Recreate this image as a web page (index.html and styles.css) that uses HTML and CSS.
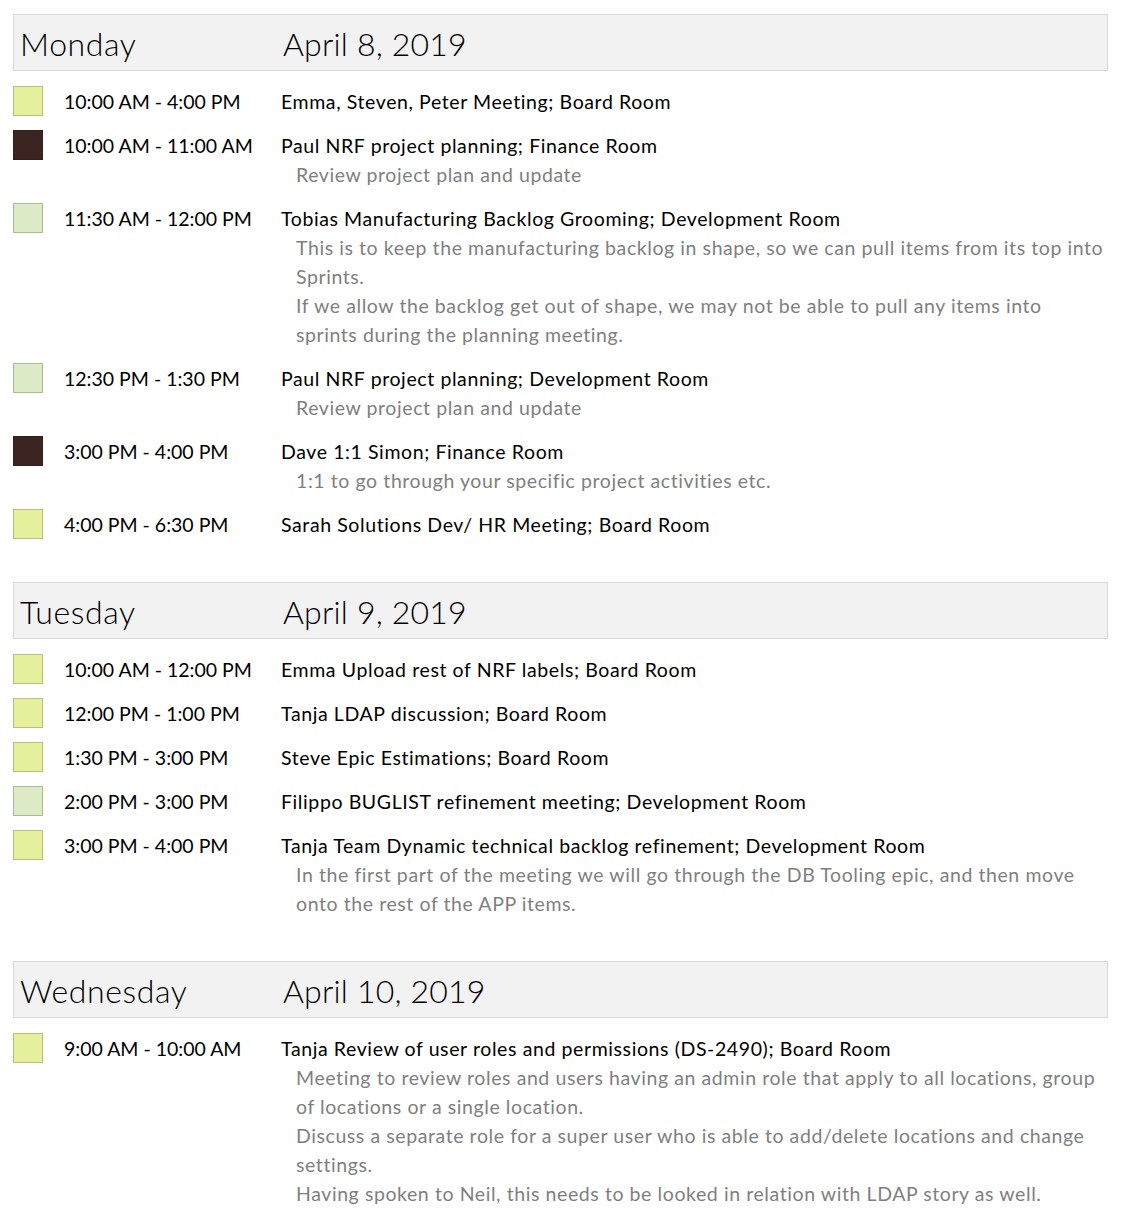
FILE: index.html
```html
<!DOCTYPE html>
<html>
<head>
<meta charset="utf-8">
<link rel="stylesheet" href="styles.css">
</head>
<body>
<div class="agenda">

<section class="day">
  <div class="day-head"><span class="day-name">Monday</span><span class="day-date">April 8, 2019</span></div>
  <div class="item"><span class="sw sw-yellow"></span><span class="time">10:00 AM - 4:00 PM</span><div class="info"><div class="title">Emma, Steven, Peter Meeting; Board Room</div></div></div>
  <div class="item"><span class="sw sw-brown"></span><span class="time">10:00 AM - 11:00 AM</span><div class="info"><div class="title">Paul NRF project planning; Finance Room</div><div class="desc">Review project plan and update</div></div></div>
  <div class="item"><span class="sw sw-green"></span><span class="time">11:30 AM - 12:00 PM</span><div class="info"><div class="title">Tobias Manufacturing Backlog Grooming; Development Room</div><div class="desc">This is to keep the manufacturing backlog in shape, so we can pull items from its top into Sprints.</div><div class="desc">If we allow the backlog get out of shape, we may not be able to pull any items into sprints during the planning meeting.</div></div></div>
  <div class="item"><span class="sw sw-green"></span><span class="time">12:30 PM - 1:30 PM</span><div class="info"><div class="title">Paul NRF project planning; Development Room</div><div class="desc">Review project plan and update</div></div></div>
  <div class="item"><span class="sw sw-brown"></span><span class="time">3:00 PM - 4:00 PM</span><div class="info"><div class="title">Dave 1:1 Simon; Finance Room</div><div class="desc">1:1 to go through your specific project activities etc.</div></div></div>
  <div class="item"><span class="sw sw-yellow"></span><span class="time">4:00 PM - 6:30 PM</span><div class="info"><div class="title">Sarah Solutions Dev/ HR Meeting; Board Room</div></div></div>
</section>

<section class="day">
  <div class="day-head"><span class="day-name">Tuesday</span><span class="day-date">April 9, 2019</span></div>
  <div class="item"><span class="sw sw-yellow"></span><span class="time">10:00 AM - 12:00 PM</span><div class="info"><div class="title">Emma Upload rest of NRF labels; Board Room</div></div></div>
  <div class="item"><span class="sw sw-yellow"></span><span class="time">12:00 PM - 1:00 PM</span><div class="info"><div class="title">Tanja LDAP discussion; Board Room</div></div></div>
  <div class="item"><span class="sw sw-yellow"></span><span class="time">1:30 PM - 3:00 PM</span><div class="info"><div class="title">Steve Epic Estimations; Board Room</div></div></div>
  <div class="item"><span class="sw sw-green"></span><span class="time">2:00 PM - 3:00 PM</span><div class="info"><div class="title">Filippo BUGLIST refinement meeting; Development Room</div></div></div>
  <div class="item"><span class="sw sw-yellow"></span><span class="time">3:00 PM - 4:00 PM</span><div class="info"><div class="title">Tanja Team Dynamic technical backlog refinement; Development Room</div><div class="desc">In the first part of the meeting we will go through the DB Tooling epic, and then move onto the rest of the APP items.</div></div></div>
</section>

<section class="day">
  <div class="day-head"><span class="day-name">Wednesday</span><span class="day-date">April 10, 2019</span></div>
  <div class="item"><span class="sw sw-yellow"></span><span class="time">9:00 AM - 10:00 AM</span><div class="info"><div class="title">Tanja Review of user roles and permissions (DS-2490); Board Room</div><div class="desc">Meeting to review roles and users having an admin role that apply to all locations, group of locations or a single location.</div><div class="desc">Discuss a separate role for a super user who is able to add/delete locations and change settings.</div><div class="desc">Having spoken to Neil, this needs to be looked in relation with LDAP story as well.</div></div></div>
</section>

</div>
</body>
</html>
```
FILE: styles.css
```css
html, body {
  margin: 0;
  padding: 0;
  background: #ffffff;
}
body {
  font-family: "Lato", "Liberation Sans", sans-serif;
  color: #000000;
}
.agenda {
  padding: 14px 17px 0 13px;
}
.day {
  margin-bottom: 43px;
}
.day-head {
  display: flex;
  align-items: center;
  height: 55px;
  background: #f2f2f2;
  border: 1px solid #d9d9d9;
  margin-bottom: 15px;
  font-size: 32px;
  font-weight: 300;
}
.day-name {
  width: 263px;
  padding-left: 6px;
  letter-spacing: 0.6px;
}
.day-date {
  letter-spacing: 0.2px;
}
.day-head span {
  padding-top: 2px;
  line-height: 57px;
}
.item {
  display: flex;
  align-items: flex-start;
  margin-bottom: 14px;
  font-size: 19.5px;
}
.sw {
  flex: none;
  width: 28px;
  height: 28px;
  border: 1px solid;
  margin-right: 21px;
}
.sw-yellow { background: #e6ef9b; border-color: #b8c07c; }
.sw-brown { background: #3c2520; border-color: #33201b; }
.sw-green { background: #dcebc6; border-color: #a9bc92; }
.time {
  flex: none;
  width: 217px;
  padding-top: 2px;
  line-height: 28px;
}
.info {
  flex: 1;
  min-width: 0;
}
.title {
  padding-top: 2px;
  line-height: 28px;
  letter-spacing: 0.6px;
}
.desc {
  color: #7f7f7f;
  line-height: 29px;
  padding-left: 15px;
  letter-spacing: 0.58px;
}
```
